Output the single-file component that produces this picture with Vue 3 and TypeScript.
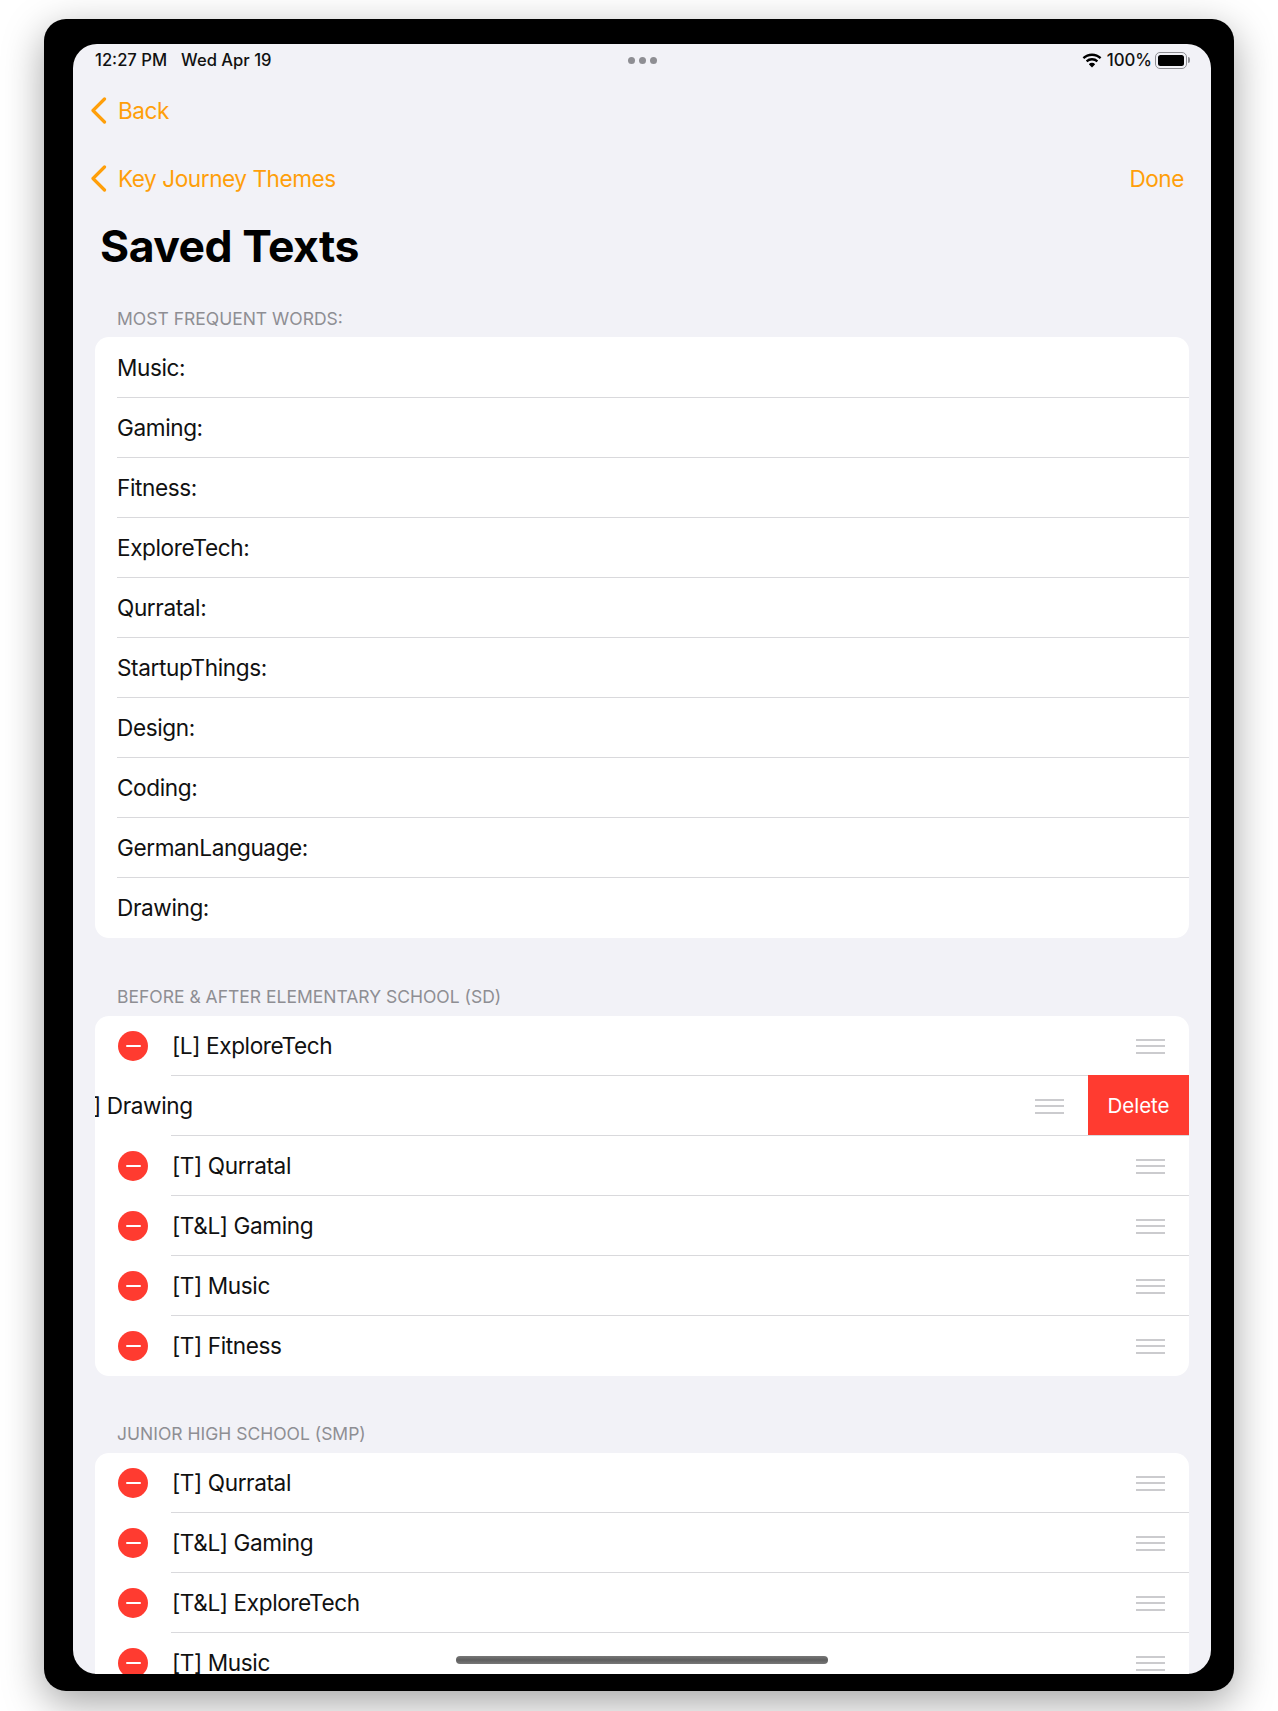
<script setup lang="ts">
interface Section {
  title: string
  editable: boolean
  rows: { label: string; swiped?: boolean }[]
}

const sections: Section[] = [
  {
    title: 'MOST FREQUENT WORDS:',
    editable: false,
    rows: ['Music:', 'Gaming:', 'Fitness:', 'ExploreTech:', 'Qurratal:', 'StartupThings:', 'Design:', 'Coding:', 'GermanLanguage:', 'Drawing:'].map((label) => ({ label })),
  },
  {
    title: 'BEFORE & AFTER ELEMENTARY SCHOOL (SD)',
    editable: true,
    rows: [
      { label: '[L] ExploreTech' },
      { label: '[T] Drawing', swiped: true },
      { label: '[T] Qurratal' },
      { label: '[T&L] Gaming' },
      { label: '[T] Music' },
      { label: '[T] Fitness' },
    ],
  },
  {
    title: 'JUNIOR HIGH SCHOOL (SMP)',
    editable: true,
    rows: [
      { label: '[T] Qurratal' },
      { label: '[T&L] Gaming' },
      { label: '[T&L] ExploreTech' },
      { label: '[T] Music' },
    ],
  },
]
</script>

<template>
  <div class="page">
    <div class="device">
      <div class="screen">
        <div class="status">
          <div class="status-left">
            <span>12:27 PM</span>
            <span>Wed Apr 19</span>
          </div>
          <div class="dots"><i></i><i></i><i></i></div>
          <div class="status-right">
            <svg class="wifi" width="20" height="15" viewBox="0 0 20 15">
              <path d="M1.4 5.2a12.4 12.4 0 0 1 17.2 0" fill="none" stroke="#000" stroke-width="2.3" />
              <path d="M4.6 8.4a7.9 7.9 0 0 1 10.8 0" fill="none" stroke="#000" stroke-width="2.3" />
              <path d="M10 14.6 6.8 11.2a4.5 4.5 0 0 1 6.4 0Z" fill="#000" />
            </svg>
            <span>100%</span>
            <div class="battery"><div class="battery-fill"></div></div>
            <div class="battery-cap"></div>
          </div>
        </div>

        <div class="nav nav-back">
          <a class="link">
            <svg width="17" height="27" viewBox="0 0 17 27"><path d="M14.5 2 3 13.5 14.5 25" fill="none" stroke="#ff9f0a" stroke-width="3.2" stroke-linecap="round" stroke-linejoin="round" /></svg>
            <span>Back</span>
          </a>
        </div>
        <div class="nav nav-main">
          <a class="link">
            <svg width="17" height="27" viewBox="0 0 17 27"><path d="M14.5 2 3 13.5 14.5 25" fill="none" stroke="#ff9f0a" stroke-width="3.2" stroke-linecap="round" stroke-linejoin="round" /></svg>
            <span>Key Journey Themes</span>
          </a>
          <a class="done">Done</a>
        </div>

        <h1 class="title">Saved Texts</h1>

        <section v-for="s in sections" :key="s.title" class="section">
          <h2 class="section-title">{{ s.title }}</h2>
          <div class="card">
            <div
              v-for="(r, i) in s.rows"
              :key="r.label"
              class="row"
              :class="{ 'row-edit': s.editable, 'row-swiped': r.swiped, 'row-last': i === s.rows.length - 1 }"
            >
              <span v-if="s.editable" class="minus"><i></i></span>
              <span class="label">{{ r.label }}</span>
              <span v-if="s.editable" class="handle"><i></i><i></i><i></i></span>
              <span v-if="r.swiped" class="delete">Delete</span>
            </div>
          </div>
        </section>

        <div class="home"></div>
      </div>
    </div>
  </div>
</template>

<style>
html, body { margin: 0; background: #fff; }
</style>

<style scoped>
.page {
  box-sizing: border-box;
  width: 1278px;
  height: 1711px;
  padding: 19px 44px 0;
  overflow: hidden;
  background: #fff;
  font-family: Inter, "Liberation Sans", sans-serif;
}
.device {
  box-sizing: border-box;
  width: 1190px;
  height: 1672px;
  padding: 25px 23px 17px 29px;
  background: #000;
  border-radius: 22px;
  box-shadow: 0 12px 40px rgba(0, 0, 0, 0.36);
}
.screen {
  position: relative;
  box-sizing: border-box;
  height: 100%;
  padding: 0 22px;
  overflow: hidden;
  background: #f2f2f7;
  border-radius: 24px;
}
.status {
  position: relative;
  display: flex;
  justify-content: space-between;
  align-items: center;
  height: 32px;
  font-size: 16.6px;
  font-weight: 500;
  color: #111;
}
.status-left { display: flex; gap: 14px; }
.dots {
  position: absolute;
  left: 532.5px;
  top: 13px;
  display: flex;
  gap: 4px;
}
.dots i {
  width: 7px;
  height: 7px;
  border-radius: 50%;
  background: #8e8e93;
}
.status-right {
  display: flex;
  align-items: center;
  gap: 5px;
  margin-right: -1px;
  font-size: 16.8px;
}
.battery {
  box-sizing: border-box;
  width: 32px;
  height: 17px;
  margin-left: -2px;
  padding: 2px;
  border: 1.5px solid #8e8e93;
  border-radius: 5px;
}
.battery-fill {
  height: 100%;
  background: #000;
  border-radius: 2.5px;
}
.battery-cap {
  width: 2px;
  height: 6px;
  margin-left: -4px;
  background: #8e8e93;
  border-radius: 0 2px 2px 0;
}
.nav {
  display: flex;
  justify-content: space-between;
  align-items: center;
  margin: 0 5px 0 -5px;
  font-size: 22.6px;
  letter-spacing: -0.45px;
  color: #ff9f0a;
}
.nav-back { height: 68px; }
.nav-main { height: 68px; }
.link { display: flex; align-items: center; gap: 11px; }
.title {
  margin: 0 0 0 5px;
  height: 68px;
  line-height: 68px;
  font-size: 44.5px;
  font-weight: 700;
  letter-spacing: -0.5px;
  color: #000;
}
.section { margin-bottom: 40px; }
.section:nth-of-type(2) { margin-bottom: 39px; }
.section-title {
  margin: 0;
  padding-left: 22px;
  height: 57px;
  line-height: 78px;
  font-size: 17.5px;
  font-weight: 400;
  color: #8e8e93;
  white-space: nowrap;
}
.section + .section .section-title { height: 38px; line-height: 38px; }
.card {
  overflow: hidden;
  background: #fff;
  border-radius: 14px;
}
.section:first-of-type .card { padding-top: 1px; }
.row {
  position: relative;
  display: flex;
  align-items: center;
  box-sizing: border-box;
  height: 60px;
  padding-left: 22px;
  font-size: 22.6px;
  letter-spacing: -0.4px;
  color: #111;
}
.row::after {
  content: "";
  position: absolute;
  left: 22px;
  right: 0;
  bottom: 0;
  height: 1px;
  background: #d9d9dc;
}
.row-edit::after { left: 76px; }
.row-last::after { display: none; }
.minus {
  position: relative;
  flex: none;
  width: 30px;
  height: 30px;
  margin: 0 24px 0 1px;
  border-radius: 50%;
  background: #ff3b30;
}
.minus i {
  position: absolute;
  left: 7.5px;
  right: 7.5px;
  top: 14px;
  height: 2px;
  background: #fff;
  border-radius: 1px;
}
.label { flex: 1; margin-bottom: 2px; white-space: nowrap; }
.handle {
  display: flex;
  flex-direction: column;
  gap: 4.5px;
  flex: none;
  width: 29px;
  margin-right: 24px;
}
.handle i {
  height: 2px;
  background: #cbcbce;
}
.row-swiped { margin-left: -101px; }
.row-swiped::after { left: 177px; }
.delete {
  position: relative;
  z-index: 1;
  flex: none;
  align-self: stretch;
  display: flex;
  align-items: center;
  justify-content: center;
  width: 101px;
  margin: -1px 0 1px;
  background: #ff3b30;
  color: #fff;
  font-size: 20.5px;
  letter-spacing: 0;
}
.home {
  position: absolute;
  left: 383px;
  bottom: 10px;
  width: 372px;
  height: 8px;
  border-radius: 4px;
  background: linear-gradient(#777, #5e5e5e 50%, #777);
}
</style>
